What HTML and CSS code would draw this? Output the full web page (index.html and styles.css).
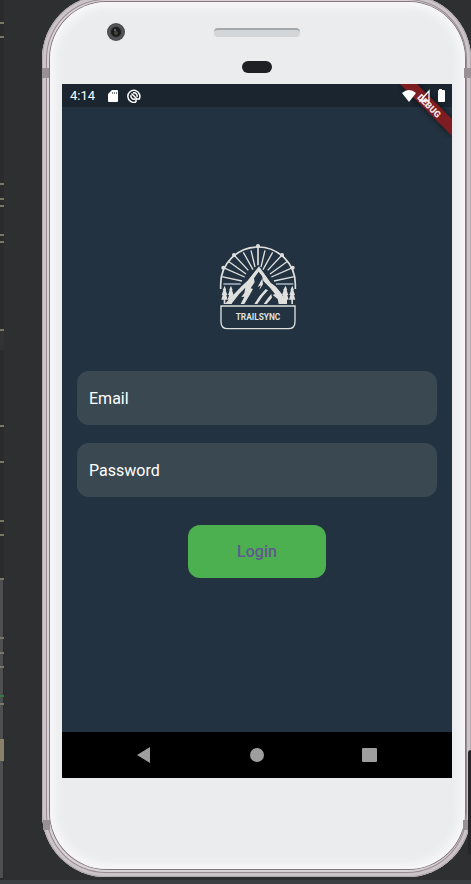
FILE: index.html
```html
<!DOCTYPE html>
<html lang="en">
<head>
<meta charset="utf-8">
<meta name="viewport" content="width=device-width, initial-scale=1">
<title>TrailSync Login</title>
<link rel="stylesheet" href="styles.css">
</head>
<body>
<div class="workspace">
  <svg class="gutter" width="4" height="880" aria-hidden="true">
    <rect width="4" height="880" fill="#2b2b2b"/>
    <rect y="330" width="4" height="20" fill="#323232"/>
    <rect y="578" width="3" height="300" fill="#4e4f50"/>
    <path stroke="#7b7666" stroke-width="2" d="M0 23h4M0 37h4M0 184h4M0 199h4M0 206h4M0 235h4M0 242h4M0 330h4M0 426h4M0 462h4M0 521h4M0 535h4M0 579h4M0 638h4M0 653h4M0 667h4M0 704h4"/>
    <path stroke="#2f7d3c" stroke-width="2" d="M0 696h4"/>
    <rect y="739" width="4" height="22" fill="#8a8268"/>
  </svg>
  <div class="phone">
    <span class="band band-tl"></span><span class="band band-tr"></span>
    <span class="band band-bl"></span><span class="band band-br"></span>
    <div class="face">
      <div class="forehead">
        <svg class="camera" width="20" height="20" viewBox="0 0 20 20" aria-hidden="true">
          <circle cx="10" cy="10" r="9" fill="#4a4b4e"/>
          <circle cx="10" cy="10" r="7" fill="none" stroke="#5c5d61"/>
          <circle cx="10" cy="10" r="5" fill="#1b1c1e"/>
          <circle cx="10" cy="11" r="2" fill="#45463a"/>
          <circle cx="9" cy="8" r="1" fill="#777a7c"/>
        </svg>
        <div class="earpiece">
          <span class="speaker"></span>
          <span class="sensor"></span>
        </div>
      </div>
      <main class="screen">
        <header class="status">
          <span class="time">4:14</span>
          <svg width="12" height="14" viewBox="0 0 12 14" aria-hidden="true">
            <path fill="#fff" d="M5 1h5q1 0 1 1v10q0 1-1 1H2q-1 0-1-1V5z"/>
            <path stroke="#1b2630" d="M5.500 3v2M7.500 3v2M9.500 3v2" opacity=".6"/>
          </svg>
          <svg class="sync" width="14" height="14" viewBox="0 0 14 14" fill="none" stroke="#fff" aria-hidden="true">
            <path stroke-width="1.500" d="M9 13A6 6 0 1 1 12 10.500"/>
            <path stroke-width="1.500" d="M4.500 4.500L9.500 9.500M6 4A3.200 3.200 0 0 1 10 8M4 6A3.200 3.200 0 0 0 8 10M9 13V10H12"/>
          </svg>
          <svg class="signals" width="44" height="16" viewBox="0 0 44 16" aria-hidden="true">
            <path fill="#fff" d="M1 5Q8-1 15 5L8 14z"/>
            <path fill="none" stroke="#fff" stroke-width="1.300" d="M19 13L28 3V13z"/>
            <path fill="#fff" d="M38 1h3v1h2q1 0 1 1v10q0 1-1 1h-5q-1 0-1-1V3q0-1 1-1z"/>
          </svg>
        </header>
        <svg class="debug" width="54" height="54" viewBox="0 0 54 54">
          <path class="debug-shade" d="M2 0H19L54 35V52z"/>
          <path fill="#7d1d22" d="M2 0H19L54 35V52z"/>
          <text x="31" y="25" transform="rotate(45 31 22)">DEBUG</text>
        </svg>
        <form class="login">
          <svg class="logo" width="78" height="88" viewBox="43 24 234 264" fill="none" stroke="#dfe0de" role="img" aria-label="TrailSync">
            <path stroke-width="5" d="M48 162V148A112 112 0 0 1 272 148V162"/>
            <g stroke-width="4">
              <path stroke-width="5" d="M160 34V91"/>
              <path d="M88 60L131 106M232 60L189 106M56 98L120 126M264 98L200 126M116 52L145 104M204 52L175 104M139 46L151 96M181 46L169 96M70 78L124 117M250 78L196 117M51 125L112 138M269 125L208 138"/>
              <path stroke="#a9b5c5" d="M56 147H108M214 147H266"/>
            </g>
            <g fill="#dfe0de" stroke="none">
              <circle cx="160" cy="33" r="6"/><circle cx="88" cy="60" r="6"/><circle cx="232" cy="60" r="6"/><circle cx="56" cy="98" r="6"/><circle cx="264" cy="98" r="6"/>
              <path d="M163 94L128 138 112 152 60 207H80L104 176 122 158 119 174 110 186 119 185 108 207H119L135 180 145 162 138 160 150 142 148 130 162 110 172 123 176 138 196 158 211 177 204 180 219 192 222 207H246L232 178 214 155 198 143z"/>
              <path d="M173 130L175 148 164 165 168 151 159 156zM183 162L190 166 174 184 158 207H149L164 184zM200 177L202 188 186 207H177L190 189z"/>
              <path d="M60 152l5 14-2 0 5 14-3 0 4 14-7 0v13h-5v-13h-7l4-14-3 0 5-14-2 0zM79 152l5 14-2 0 5 14-3 0 3 6-6 8v13h-5v-13h-7l4-14-3 0 5-14-2 0zM243 152l5 14-2 0 5 14-3 0 4 14-5 0v13h-8l-4-23 0-4-3 0 5-14-2 0zM263 152l5 14-2 0 5 14-3 0 4 14-7 0v13h-5v-13h-7l4-14-3 0 5-14-2 0z"/>
            </g>
            <path stroke-width="4" d="M49 213H271V260Q271 281 250 281H70Q49 281 49 260z"/>
            <text class="logo-name" x="160" y="256">TRAILSYNC</text>
          </svg>
          <label class="field"><span>Email</span><input type="email" name="email"></label>
          <label class="field"><span>Password</span><input type="password" name="password"></label>
          <button class="submit" type="button">Login</button>
        </form>
        <nav class="navbar">
          <button type="button" aria-label="Back"><svg width="16" height="16" viewBox="0 0 16 16"><path d="M1 8L14 0V16z"/></svg></button>
          <button type="button" aria-label="Home"><svg width="16" height="16" viewBox="0 0 16 16"><circle cx="8" cy="8" r="7"/></svg></button>
          <button type="button" aria-label="Overview"><svg width="16" height="16" viewBox="0 0 16 16"><rect width="15" height="14" y="1" rx="1"/></svg></button>
        </nav>
      </main>
    </div>
  </div>
  <span class="edge-panel"></span>
</div>
</body>
</html>
```

FILE: styles.css
```css
* {
  box-sizing: border-box;
}

body {
  margin: 0;
  min-height: 100vh;
  display: flex;
  flex-direction: column;
  overflow: hidden;
  background: #2d2f30;
  border-bottom: 4px solid #3c3f41;
  font-family: Roboto, "Liberation Sans", sans-serif;
}

.workspace {
  position: relative;
  flex: 1;
  display: flex;
  align-items: stretch;
}

.gutter {
  flex: none;
}

.phone {
  position: relative;
  flex: 1;
  display: flex;
  margin: -5px 0 3px 38px;
  padding: 7px 6px 8px 8px;
  border-radius: 64px;
  background: #d8d1d5;
  box-shadow:
    inset 0 0 0 1px #b3abb0,
    inset 0 0 0 4px #cbc4c8,
    inset 0 0 0 5px #988c92;
}

.face {
  flex: 1;
  display: flex;
  flex-direction: column;
  padding: 0 13px 91px 12px;
  border-radius: 57px;
  background: #ebeced;
  box-shadow: 0 0 0 1px #83777c, inset 0 0 10px 5px #f8f8fa;
}

.band {
  position: absolute;
  width: 7px;
  height: 10px;
  background: #989094;
}

.band-tl { top: 73px; left: 0; }
.band-tr { top: 73px; right: 0; }
.band-bl { bottom: 47px; left: 1px; }
.band-br { bottom: 47px; right: 1px; }

.edge-panel {
  position: absolute;
  right: 0;
  bottom: 25px;
  width: 3px;
  height: 105px;
  border-radius: 3px 0 0 3px;
  background: #252728;
}

.forehead {
  height: 82px;
  display: grid;
  grid-template-columns: 1fr 88px 1fr;
  align-items: start;
}

.camera {
  margin: 20px 0 0 44px;
}

.earpiece {
  display: flex;
  flex-direction: column;
  align-items: center;
  gap: 24px;
  padding-top: 26px;
}

.speaker {
  width: 86px;
  height: 9px;
  border-radius: 4px;
  border-top: 2px solid #a2a8ac;
  background: #d3d6d9;
}

.sensor {
  width: 30px;
  height: 12px;
  border-radius: 6px;
  background: #1e2023;
}

.screen {
  position: relative;
  flex: 1;
  display: flex;
  flex-direction: column;
  background: #223240;
  overflow: hidden;
}

.status {
  position: relative;
  z-index: 1;
  height: 23px;
  display: flex;
  align-items: center;
  padding: 0 7px 0 8px;
  color: #fff;
  font-size: 13px;
}

.screen::before {
  content: "";
  position: absolute;
  inset: 0 0 auto;
  height: 23px;
  background: #1a2530;
}

.time {
  width: 37px;
}

.sync {
  margin-left: 8px;
}

.signals {
  margin-left: auto;
}

.debug {
  position: absolute;
  top: 0;
  right: 0;
}

.debug-shade {
  fill: #000;
  filter: blur(3px);
  opacity: 0.6;
}

.debug text {
  fill: #f2e6e6;
  font-size: 9px;
  font-weight: 900;
  text-anchor: middle;
}

.login {
  flex: 1;
  display: flex;
  flex-direction: column;
  align-items: center;
  justify-content: center;
  padding: 0 15px 18px;
}

.logo {
  margin: 0 0 40px 2px;
}

.logo-name {
  fill: #dfe0de;
  stroke: none;
  font-size: 25px;
  font-weight: 700;
  text-anchor: middle;
}

.field {
  align-self: stretch;
  height: 54px;
  display: flex;
  align-items: center;
  gap: 8px;
  margin-bottom: 18px;
  padding: 0 12px;
  border-radius: 12px;
  background: #3a4852;
  color: #fff;
  font-size: 16px;
}

.field input {
  flex: 1;
  min-width: 0;
  border: 0;
  outline: 0;
  background: transparent;
  color: inherit;
  font: inherit;
}

.submit {
  width: 138px;
  height: 53px;
  margin-top: 10px;
  border: 0;
  border-radius: 12px;
  background: #4caf50;
  color: #61598f;
  font-family: inherit;
  font-size: 16px;
  font-weight: 500;
}

.navbar {
  height: 46px;
  display: flex;
  align-items: center;
  justify-content: center;
  gap: 65px;
  background: #000;
}

.navbar button {
  width: 48px;
  height: 46px;
  display: grid;
  place-items: center;
  padding: 0;
  border: 0;
  background: none;
}

.navbar svg {
  fill: #9e9e9e;
}
```
